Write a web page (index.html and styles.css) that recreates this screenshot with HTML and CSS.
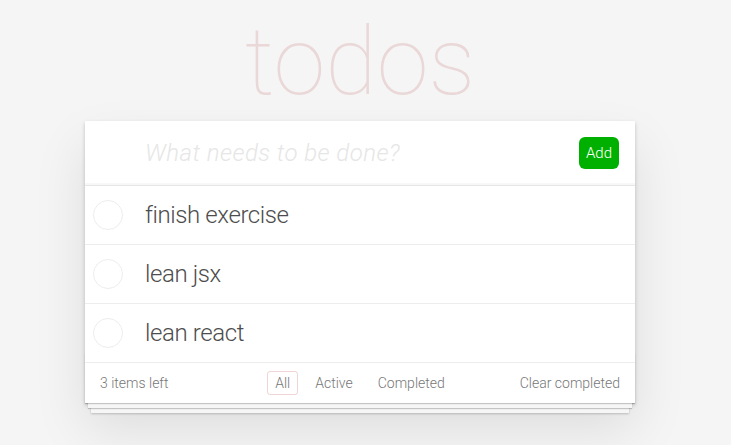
FILE: index.html
```html
<!DOCTYPE html>
<html>
<head>
<meta charset="utf-8">
<link rel="stylesheet" href="styles.css">
</head>
<body>
<div class="page">
  <h1 class="title">todos</h1>
  <section class="app">
    <header class="header">
      <input class="new-todo" placeholder="What needs to be done?">
      <button class="add-btn">Add</button>
    </header>
    <ul class="todo-list">
      <li class="todo"><span class="toggle"></span><label class="todo-label">finish exercise</label></li>
      <li class="todo"><span class="toggle"></span><label class="todo-label">lean jsx</label></li>
      <li class="todo"><span class="toggle"></span><label class="todo-label">lean react</label></li>
    </ul>
    <footer class="footer">
      <span class="count">3 items left</span>
      <ul class="filters">
        <li><a class="filter selected">All</a></li>
        <li><a class="filter">Active</a></li>
        <li><a class="filter">Completed</a></li>
      </ul>
      <button class="clear">Clear completed</button>
    </footer>
  </section>
</div>
</body>
</html>
```
FILE: styles.css
```css
html, body { margin: 0; padding: 0; }
body {
  background: #f5f5f5;
  min-height: 100vh;
  font-family: Roboto, "Liberation Sans", Arial, sans-serif;
  font-weight: 300;
  font-variant-ligatures: none;
  color: #4d4d4d;
}
.page {
  width: 550px;
  margin: 0 auto;
  padding-right: 11px;
}
.title {
  margin: 0;
  padding-top: 15px;
  height: 121px;
  box-sizing: border-box;
  text-align: center;
  font-family: Roboto, "Liberation Sans", sans-serif;
  font-weight: 100;
  font-size: 94px;
  line-height: 94px;
  color: rgba(175, 47, 47, 0.15);
}
.app {
  position: relative;
  background: #fff;
  box-shadow: 0 2px 4px rgba(0,0,0,0.2), 0 25px 50px rgba(0,0,0,0.1);
}
.header {
  display: flex;
  align-items: center;
  box-shadow: inset 0 -2px 1px rgba(0,0,0,0.03);
  padding-right: 16px;
  height: 64px;
}
.new-todo {
  flex: 1;
  min-width: 0;
  border: 0;
  outline: none;
  background: transparent;
  padding: 0 16px 0 60px;
  font-family: inherit;
  font-weight: 300;
  font-size: 24px;
  line-height: 33px;
  height: 64px;
  box-sizing: border-box;
  color: #4d4d4d;
}
.new-todo::placeholder {
  font-style: italic;
  font-weight: 300;
  letter-spacing: 0.45px;
  color: #e6e6e6;
}
.add-btn {
  border: 0;
  background: #00b000;
  color: #fff;
  font-family: Roboto, "Liberation Sans", Arial, sans-serif;
  font-weight: 300;
  font-size: 15px;
  width: 40px;
  height: 32px;
  border-radius: 6px;
  padding: 0;
}
.todo-list {
  list-style: none;
  margin: 0;
  padding: 0;
  border-top: 1px solid #e6e6e6;
}
.todo {
  display: flex;
  align-items: center;
  height: 58px;
  border-bottom: 1px solid #ededed;
}
.toggle {
  width: 30px;
  height: 30px;
  box-sizing: border-box;
  border: 1px solid #ededed;
  border-radius: 50%;
  margin-left: 8px;
  margin-right: 22px;
}
.todo-label {
  font-size: 24px;
  line-height: 29px;
  letter-spacing: -0.4px;
  color: #4d4d4d;
}
.footer {
  position: relative;
  display: flex;
  align-items: center;
  justify-content: space-between;
  height: 40px;
  padding: 0 15px;
  color: #777;
  font-size: 14px;
}
.footer::before {
  content: '';
  position: absolute;
  right: 0;
  bottom: 0;
  left: 0;
  height: 50px;
  overflow: hidden;
  box-shadow: 0 1px 1px rgba(0,0,0,0.2),
              0 8px 0 -3px #f6f6f6,
              0 9px 1px -3px rgba(0,0,0,0.2),
              0 16px 0 -6px #f6f6f6,
              0 17px 2px -6px rgba(0,0,0,0.2);
  pointer-events: none;
}
.count { width: 150px; }
.filters {
  list-style: none;
  margin: 0;
  padding: 0;
  display: flex;
  gap: 9px;
}
.filter {
  display: block;
  padding: 3px 7px;
  border: 1px solid transparent;
  border-radius: 3px;
  color: #777;
}
.filter.selected { border-color: rgba(175, 47, 47, 0.2); }
.clear {
  border: 0;
  background: none;
  padding: 0;
  font-family: inherit;
  font-weight: 300;
  font-size: 14px;
  color: #777;
  width: 150px;
  text-align: right;
}
```
